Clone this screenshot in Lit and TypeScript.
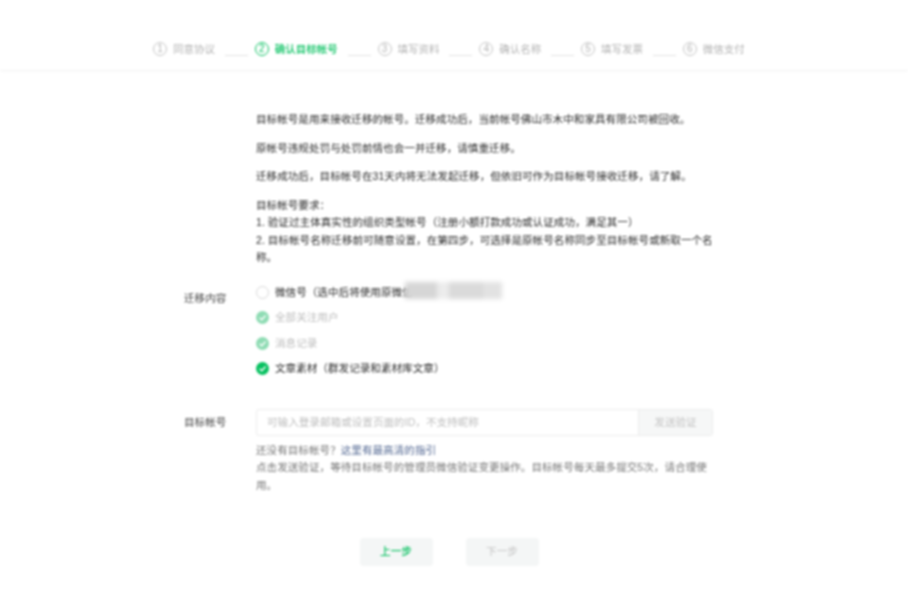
import { LitElement, html, css } from "lit";
import { customElement } from "lit/decorators.js";

const steps = ["同意协议", "确认目标帐号", "填写资料", "确认名称", "填写发票", "微信支付"];

@customElement("app-root")
export class AppRoot extends LitElement {
  static styles = css`
    :host {
      display: block;
      height: 600px;
      overflow: hidden;
      background: #fff;
      color: #2b2b2b;
      font-family: "Liberation Sans", "Noto Sans CJK SC", sans-serif;
      font-size: 10.6px;
      line-height: 17.5px;
      filter: blur(0.85px);
    }
    .header {
      height: 71px;
      box-sizing: border-box;
      padding: 40px 0 0 153px;
      display: flex;
      border-bottom: 1px solid #f4f4f4;
      box-shadow: 0 1px 3px rgba(0, 0, 0, 0.02);
      color: #b4b4b4;
      font-size: 10.5px;
      line-height: 18px;
    }
    .step { display: flex; align-items: center; height: 18px; }
    .num {
      width: 14px;
      height: 14px;
      box-sizing: border-box;
      border: 1px solid #c4c4c4;
      border-radius: 50%;
      display: flex;
      align-items: center;
      justify-content: center;
      font-size: 10px;
      margin-right: 6px;
    }
    .step.on { color: #07c160; font-weight: 500; }
    .step.on .num { border-color: #07c160; }
    .line { width: 23px; height: 1px; background: #e2e2e2; margin: 1px 7px 0 9.75px; align-self: center; }
    .main { padding: 40px 0 0 184px; width: 713px; box-sizing: border-box; }
    .intro { margin-left: 72px; }
    .intro p { margin: 0 0 11px; }
    .row { display: flex; }
    .label { width: 72px; flex: none; color: #444; }
    .body { flex: 1; min-width: 0; }
    .content { margin-top: 13px; }
    .content .label { padding-top: 10px; }
    .opt { display: flex; align-items: center; height: 25.5px; white-space: nowrap; }
    .opt.dim { color: #bdbdbd; }
    .radio {
      width: 13px;
      height: 13px;
      box-sizing: border-box;
      border-radius: 50%;
      margin-right: 6px;
      flex: none;
      display: flex;
      align-items: center;
      justify-content: center;
    }
    .radio.off { border: 1px solid #d8d8d8; }
    .radio.on { background: #07c160; }
    .opt.dim .radio.on { background: #8fdcb4; }
    .radio svg { width: 9px; height: 9px; }
    .smudge {
      width: 97px;
      height: 17px;
      margin: -3px 0 0 -8px;
      flex: none;
      background: linear-gradient(90deg, #d6d6d6 0 33%, #ececec 33% 45%, #dadada 45% 80%, #e2e2e2 80%);
      filter: blur(2px);
    }
    .target { margin-top: 27px; }
    .target .label { padding-top: 5px; }
    .field {
      display: flex;
      height: 27px;
      border: 1px solid #ececec;
      border-radius: 3px;
      box-sizing: border-box;
      overflow: hidden;
    }
    .input { flex: 1; padding: 0 10px; line-height: 25px; color: #bdbdbd; white-space: nowrap; }
    .send {
      width: 73px;
      border-left: 1px solid #ececec;
      background: #f6f7f7;
      color: #c4c4c4;
      text-align: center;
      line-height: 25px;
    }
    .hint { margin-top: 6px; color: #777; }
    .hint a { color: #576b95; text-decoration: none; }
    .actions { display: flex; justify-content: center; gap: 33px; margin-top: 44px; width: 898px; }
    .btn {
      width: 73px;
      height: 28px;
      border-radius: 4px;
      background: #f4f6f6;
      display: flex;
      align-items: center;
      justify-content: center;
      color: #c4c4c4;
    }
    .btn.prev { color: #07c160; font-weight: 500; }
  `;

  private check() {
    return html`<svg viewBox="0 0 10 10"><path d="M1.8 5.2 4.2 7.5 8.4 2.8" fill="none" stroke="#fff" stroke-width="1.4"/></svg>`;
  }

  render() {
    return html`
      <div class="header">
        ${steps.map(
          (s, i) => html`
            ${i > 0 ? html`<span class="line"></span>` : ""}
            <div class="step ${i === 1 ? "on" : ""}"><span class="num">${i + 1}</span>${s}</div>
          `
        )}
      </div>
      <div class="main">
        <div class="intro">
          <p>目标帐号是用来接收迁移的帐号。迁移成功后&#xFF0C;当前帐号佛山市木中和家具有限公司被回收。</p>
          <p>原帐号违规处罚与处罚前情也会一并迁移&#xFF0C;请慎重迁移。</p>
          <p>迁移成功后&#xFF0C;目标帐号在31天内将无法发起迁移&#xFF0C;但依旧可作为目标帐号接收迁移&#xFF0C;请了解。</p>
          <p>
            目标帐号要求&#xFF1A;<br />
            1. 验证过主体真实性的组织类型帐号&#xFF08;注册小额打款成功或认证成功&#xFF0C;满足其一&#xFF09;<br />
            2. 目标帐号名称迁移前可随意设置&#xFF0C;在第四步&#xFF0C;可选择是原帐号名称同步至目标帐号或新取一个名称。
          </p>
        </div>
        <div class="row content">
          <div class="label">迁移内容</div>
          <div class="body">
            <div class="opt"><span class="radio off"></span>微信号&#xFF08;选中后将使用原微信<span class="smudge"></span></div>
            <div class="opt dim"><span class="radio on">${this.check()}</span>全部关注用户</div>
            <div class="opt dim"><span class="radio on">${this.check()}</span>消息记录</div>
            <div class="opt"><span class="radio on">${this.check()}</span>文章素材&#xFF08;群发记录和素材库文章&#xFF09;</div>
          </div>
        </div>
        <div class="row target">
          <div class="label">目标帐号</div>
          <div class="body">
            <div class="field">
              <div class="input">可输入登录邮箱或设置页面的ID&#xFF0C;不支持昵称</div>
              <div class="send">发送验证</div>
            </div>
            <div class="hint">
              还没有目标帐号&#xFF1F;<a>这里有最高清的指引</a><br />
              点击发送验证&#xFF0C;等待目标帐号的管理员微信验证变更操作。目标帐号每天最多提交5次&#xFF0C;请合理使用。
            </div>
          </div>
        </div>
      </div>
      <div class="actions">
        <div class="btn prev">上一步</div>
        <div class="btn">下一步</div>
      </div>
    `;
  }
}
